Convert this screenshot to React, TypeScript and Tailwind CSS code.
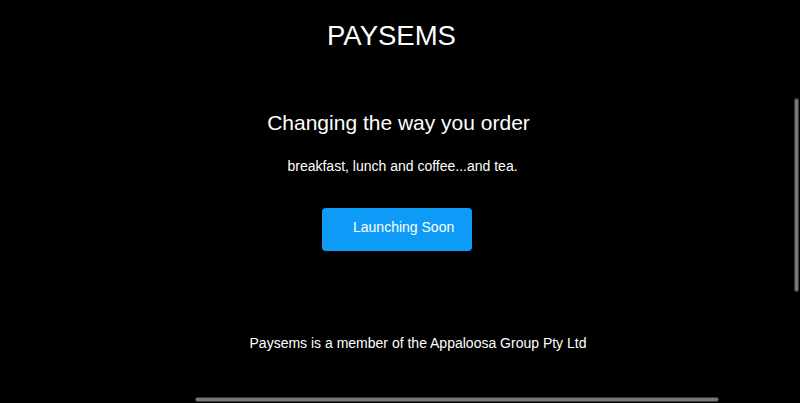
export default function App() {
  return (
    <div className="relative h-[403px] w-[800px] overflow-hidden bg-black text-white font-['Liberation_Sans',Arial,sans-serif]">
      <div className="flex flex-col">
        <h1 className="mt-[20px] pr-[17px] text-center text-[27.5px] leading-[32px]">PAYSEMS</h1>
        <h2 className="mt-[59px] pr-[3px] text-center text-[21px] leading-[24px]">
          Changing the way you order
        </h2>
        <p className="mt-[23px] pl-[5px] text-center text-[14px] leading-[16px]">
          breakfast, lunch and coffee...and tea.
        </p>
        <div className="mt-[34px] flex justify-center pr-[6px]">
          <button className="flex h-[43px] w-[150px] items-center rounded-[4px] bg-[#0d9bf7] pb-[5px] pl-[31px] text-[14px] text-white">
            Launching Soon
          </button>
        </div>
        <p className="mt-[84px] pl-[36px] text-center text-[14px] leading-[16px]">
          Paysems is a member of the Appaloosa Group Pty Ltd
        </p>
      </div>

      {/* overlay scrollbars */}
      <div className="absolute left-[794px] top-[98px] h-[194px] w-[5px] rounded-full border border-[#3a3a3a] bg-[#777]" />
      <div className="absolute left-[195px] top-[397px] h-[5px] w-[524px] rounded-full border border-[#3a3a3a] bg-[#777]" />
    </div>
  );
}
